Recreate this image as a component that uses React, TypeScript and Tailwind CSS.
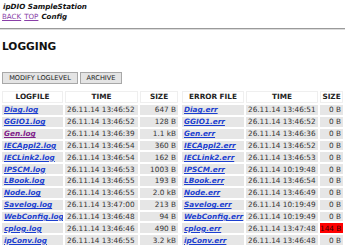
import { FC } from 'react'

type Row = { name: string; time: string; size: string; visited?: boolean; alert?: boolean }

const logs: Row[] = [
  { name: 'Diag.log', time: '26.11.14 13:46:52', size: '647 B' },
  { name: 'GGIO1.log', time: '26.11.14 13:46:52', size: '128 B' },
  { name: 'Gen.log', time: '26.11.14 13:46:39', size: '1.1 kB', visited: true },
  { name: 'IECAppl2.log', time: '26.11.14 13:46:54', size: '360 B' },
  { name: 'IECLink2.log', time: '26.11.14 13:46:54', size: '162 B' },
  { name: 'IPSCM.log', time: '26.11.14 13:46:53', size: '1003 B' },
  { name: 'LBook.log', time: '26.11.14 13:46:55', size: '193 B' },
  { name: 'Node.log', time: '26.11.14 13:46:55', size: '2.0 kB' },
  { name: 'Savelog.log', time: '26.11.14 13:47:00', size: '213 B' },
  { name: 'WebConfig.log', time: '26.11.14 13:46:48', size: '94 B' },
  { name: 'cplog.log', time: '26.11.14 13:46:46', size: '490 B' },
  { name: 'ipConv.log', time: '26.11.14 13:46:55', size: '3.2 kB' },
]

const errors: Row[] = [
  { name: 'Diag.err', time: '26.11.14 13:46:51', size: '0 B' },
  { name: 'GGIO1.err', time: '26.11.14 13:46:52', size: '0 B' },
  { name: 'Gen.err', time: '26.11.14 13:46:36', size: '0 B' },
  { name: 'IECAppl2.err', time: '26.11.14 13:46:52', size: '0 B' },
  { name: 'IECLink2.err', time: '26.11.14 13:46:53', size: '0 B' },
  { name: 'IPSCM.err', time: '26.11.14 10:19:48', size: '0 B' },
  { name: 'LBook.err', time: '26.11.14 13:46:54', size: '0 B' },
  { name: 'Node.err', time: '26.11.14 13:46:49', size: '0 B' },
  { name: 'Savelog.err', time: '26.11.14 10:19:49', size: '0 B' },
  { name: 'WebConfig.err', time: '26.11.14 10:19:49', size: '0 B' },
  { name: 'cplog.err', time: '26.11.14 13:47:48', size: '144 B', alert: true },
  { name: 'ipConv.err', time: '26.11.14 13:46:48', size: '0 B' },
]

const LogTable: FC<{ title: string; rows: Row[]; widths: number[]; className: string }> = ({
  title,
  rows,
  widths,
  className,
}) => {
  return (
    <table className={`table-fixed border-separate border-spacing-[2px] text-[7.3px] ${className}`}>
      <colgroup>
        {widths.map((w, i) => (
          <col key={i} style={{ width: w }} />
        ))}
      </colgroup>
      <thead>
        <tr>
          {[title, 'TIME', 'SIZE'].map((h) => (
            <th
              key={h}
              className="h-[12px] border border-[#efefef] p-0 text-center font-bold leading-[10px] text-[#222]"
            >
              {h}
            </th>
          ))}
        </tr>
      </thead>
      <tbody>
        {rows.map((row) => (
          <tr key={row.name}>
            <td className="h-[9.85px] overflow-hidden whitespace-nowrap bg-[#e6e6e6] p-0 pl-[2px] leading-[9px]">
              <a
                href="#"
                className={`font-bold italic underline ${row.visited ? 'text-[#80208a]' : 'text-[#1c3fd0]'}`}
              >
                {row.name}
              </a>
            </td>
            <td className="overflow-hidden whitespace-nowrap bg-[#e6e6e6] p-0 pl-[2px] leading-[9px] text-[#333]">
              {row.time}
            </td>
            <td
              className={`overflow-hidden whitespace-nowrap p-0 pr-[2px] text-right leading-[9px] ${
                row.alert ? 'bg-[#ff0000] text-[#3a0000]' : 'bg-[#e6e6e6] text-[#333]'
              }`}
            >
              {row.size}
            </td>
          </tr>
        ))}
      </tbody>
    </table>
  )
}

export default function App() {
  return (
    <div className="h-[248px] w-[345px] overflow-hidden bg-white font-['DejaVu_Sans',sans-serif] text-[#111]">
      <div className="px-[3px] pt-[1px] text-[7.16px] font-bold italic leading-[11px]">ipDIO SampleStation</div>
      <div className="flex gap-[3px] px-[2px] text-[7.1px] leading-[10px]">
        <a href="#" className="text-[#8a3fa8] underline">
          BACK
        </a>
        <a href="#" className="text-[#8a3fa8] underline">
          TOP
        </a>
        <span className="font-bold italic">Config</span>
      </div>
      <div className="mt-[6px] border-t border-b border-t-[#9a9a9a] border-b-[#dcdcdc]" />
      <h1 className="mt-[10px] px-[2px] text-[10.6px] font-bold leading-[12px]">LOGGING</h1>
      <div className="mt-[20px] flex gap-[2px] px-[2px]">
        <button className="h-[12px] w-[76px] border border-[#a8a8a8] bg-[#e4e4e4] p-0 text-[6.6px] leading-[10px] text-[#222]">
          MODIFY LOGLEVEL
        </button>
        <button className="h-[12px] w-[42px] border border-[#a8a8a8] bg-[#e4e4e4] p-0 text-[6.6px] leading-[10px] text-[#222]">
          ARCHIVE
        </button>
      </div>
      <div className="mt-[5px] flex">
        <LogTable title="LOGFILE" rows={logs} widths={[61, 73, 38]} className="w-[180px]" />
        <LogTable title="ERROR FILE" rows={errors} widths={[62, 72, 23]} className="w-[165px]" />
      </div>
    </div>
  )
}
